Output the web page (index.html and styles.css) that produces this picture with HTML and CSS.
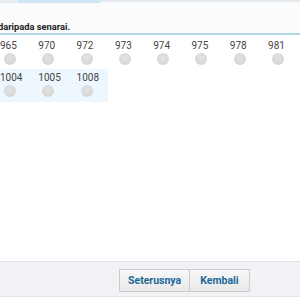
FILE: index.html
```html
<!DOCTYPE html>
<html lang="ms">
<head>
	<title>Pilih nombor</title>
	<link rel="stylesheet" href="styles.css">
</head>
<body>
<div class="page">
	<div class="tabs">
		<div class="tab-edge"></div>
		<div class="tab-active"></div>
		<div class="tab-rest"></div>
	</div>

	<div class="heading">
		<span class="heading-text">daripada senarai.</span>
	</div>

	<div class="choices">
		<div class="choice-row">
			<label class="choice"><span class="num">965</span><span class="radio"></span></label>
			<label class="choice"><span class="num">970</span><span class="radio"></span></label>
			<label class="choice"><span class="num">972</span><span class="radio"></span></label>
			<label class="choice"><span class="num">973</span><span class="radio"></span></label>
			<label class="choice"><span class="num">974</span><span class="radio"></span></label>
			<label class="choice"><span class="num">975</span><span class="radio"></span></label>
			<label class="choice"><span class="num">978</span><span class="radio"></span></label>
			<label class="choice"><span class="num">981</span><span class="radio"></span></label>
		</div>
		<div class="choice-row alt">
			<label class="choice"><span class="num">1004</span><span class="radio"></span></label>
			<label class="choice"><span class="num">1005</span><span class="radio"></span></label>
			<label class="choice"><span class="num">1008</span><span class="radio"></span></label>
		</div>
	</div>

	<div class="footer">
		<div class="buttons">
			<div class="button">Seterusnya</div>
			<div class="button">Kembali</div>
		</div>
	</div>
</div>
</body>
</html>
```

FILE: styles.css
```css
body {
    margin: 0;
    font-family: Roboto, "Noto Sans", sans-serif;
    background: #ffffff;
}

.page {
    width: 300px;
    height: 300px;
    display: flex;
    flex-direction: column;
    overflow: hidden;
}

.tabs {
    display: flex;
    height: 3px;
}

.tab-edge {
    width: 18px;
    background: #e9ecef;
}

.tab-active {
    width: 82px;
    background: #cfe6f5;
}

.tab-rest {
    flex: 1;
    background: #fafbfc;
    border-top: 2px solid #e6e9ec;
}

.heading {
    height: 30px;
    background: #fafbfc;
    border-bottom: 2px solid #b3d6e6;
    display: flex;
    align-items: flex-end;
    overflow: hidden;
}

.heading-text {
    margin-left: -2px;
    padding-bottom: 1px;
    font-size: 9.3px;
    font-weight: bold;
    color: #222222;
}

.choices {
    flex: 1;
    padding-top: 5px;
}

.choice-row {
    display: flex;
    margin-left: -1px;
    height: 29px;
}

.choice-row.alt {
    width: 109px;
    height: 30px;
    padding-top: 3px;
    background: #eef7fd;
}

.choice {
    width: 38.3px;
    flex: none;
    display: flex;
    flex-direction: column;
    align-items: flex-start;
}

.num {
    font-size: 10px;
    color: #444444;
    line-height: 12px;
    padding-left: 1px;
}

.radio {
    width: 12px;
    height: 12px;
    margin: 1px 0 0 5px;
    border-radius: 50%;
    background: radial-gradient(circle at 50% 40%, #e2e2e2, #d2d2d2);
}

.footer {
    height: 34px;
    margin-bottom: 3px;
    background: #f0f2f5;
    border-top: 1px solid #dce3ea;
    border-bottom: 1px solid #e0e4e8;
    display: flex;
    align-items: center;
}

.buttons {
    display: flex;
    margin-left: 119px;
    margin-top: 2px;
}

.button {
    padding: 0 8px;
    height: 21px;
    line-height: 21px;
    font-size: 10.5px;
    font-weight: bold;
    color: #1c6797;
    background: linear-gradient(#f8f8f8, #e9e9e9);
    border: 1px solid #cccccc;
}

.button + .button {
    padding: 0 10px;
    border-left: none;
}
```
